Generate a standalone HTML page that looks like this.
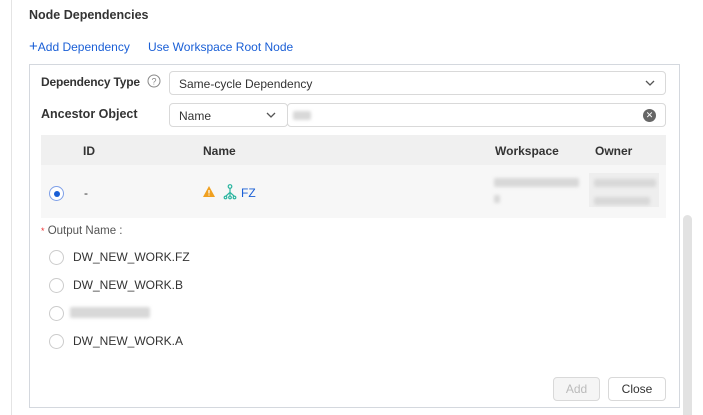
<!DOCTYPE html><html><head><style>
body{margin:0;width:703px;height:415px;background:#fff;font-family:"Liberation Sans",sans-serif;font-size:12px;color:#333;position:relative;overflow:hidden}
.a{position:absolute}
.sel{position:absolute;border:1px solid #d9d9d9;border-radius:4px;background:#fff;box-sizing:border-box}
.rad{position:absolute;width:15px;height:15px;border:1px solid #ccc;border-radius:50%;box-sizing:border-box;background:#fff}
.blur{position:absolute;background:#d8d8d8;filter:blur(1.5px);border-radius:2px}
.chev{position:absolute;top:8px}
</style></head><body>
<div class="a" style="left:11px;top:0;width:1px;height:415px;background:#e4e4e4"></div>
<div class="a" style="left:29px;top:8px;font-weight:bold;font-size:12.5px;color:#333">Node Dependencies</div>
<div class="a" style="left:29px;top:40px;color:#1a5fd6"><span style="font-size:15px;line-height:12px">+</span>Add Dependency</div>
<div class="a" style="left:148px;top:40px;color:#1a5fd6">Use Workspace Root Node</div>
<div class="a" style="left:29px;top:64px;width:651px;height:344px;border:1px solid #d4d8de;box-sizing:border-box"></div>
<div class="a" style="left:41px;top:75px;font-weight:bold;font-size:12px;letter-spacing:-0.2px">Dependency Type</div>
<svg class="a" style="left:147px;top:74px" width="14" height="14" viewBox="0 0 14 14"><circle cx="7" cy="7" r="6" fill="none" stroke="#888"/><text x="7" y="10.5" font-size="9" text-anchor="middle" fill="#888" font-family="Liberation Sans">?</text></svg>
<div class="sel" style="left:169px;top:71px;width:497px;height:24px"><span class="a" style="left:9px;top:5px">Same-cycle Dependency</span><svg class="chev" style="right:10px" width="10" height="6" viewBox="0 0 10 6"><path d="M1 1l4 4 4-4" fill="none" stroke="#555" stroke-width="1.3"/></svg></div>
<div class="a" style="left:41px;top:107px;font-weight:bold;font-size:12.5px">Ancestor Object</div>
<div class="sel" style="left:169px;top:103px;width:119px;height:24px"><span class="a" style="left:9px;top:5px">Name</span><svg class="chev" style="right:11px" width="10" height="6" viewBox="0 0 10 6"><path d="M1 1l4 4 4-4" fill="none" stroke="#555" stroke-width="1.3"/></svg></div>
<div class="sel" style="left:287px;top:103px;width:379px;height:24px"><div class="blur" style="left:5px;top:7px;width:18px;height:9px"></div><span class="a" style="right:9px;top:5px;width:13px;height:13px;border-radius:50%;background:#666;color:#fff;font-size:9px;line-height:13px;text-align:center">✕</span></div>
<div class="a" style="left:41px;top:135px;width:625px;height:30px;background:#f0f0f0"></div>
<div class="a" style="left:83px;top:144px;font-weight:bold">ID</div>
<div class="a" style="left:203px;top:144px;font-weight:bold">Name</div>
<div class="a" style="left:495px;top:144px;font-weight:bold">Workspace</div>
<div class="a" style="left:595px;top:144px;font-weight:bold">Owner</div>
<div class="a" style="left:41px;top:165px;width:625px;height:53px;background:#f7f7f7"></div>
<div class="rad" style="left:49px;top:186px;border-color:#7fa0e8"><div class="a" style="left:3.5px;top:3.5px;width:6px;height:6px;border-radius:50%;background:#1a5fd6"></div></div>
<div class="a" style="left:84px;top:186px">-</div>
<svg class="a" style="left:203px;top:186px" width="12" height="11" viewBox="0 0 12 11"><path d="M6 0L12 11H0z" fill="#f0a020"/><path d="M6 4v3.5M6 8.5v1" stroke="#fff" stroke-width="1.2"/></svg>
<svg class="a" style="left:223px;top:184px" width="14" height="16" viewBox="0 0 14 16" fill="none" stroke="#2bb5a0" stroke-width="1.2"><circle cx="7" cy="2.5" r="1.8"/><path d="M7 4.3v4M7 8.3L2.5 12.5M7 8.3l4.5 4.2M7 8.3v4.2"/><circle cx="2.5" cy="13.5" r="1.3"/><circle cx="7" cy="13.5" r="1.3"/><circle cx="11.5" cy="13.5" r="1.3"/></svg>
<div class="a" style="left:241px;top:186px;color:#1a5fd6">FZ</div>
<div class="blur" style="left:494px;top:178px;width:85px;height:9px"></div>
<div class="blur" style="left:494px;top:195px;width:6px;height:8px"></div>
<div class="a" style="left:589px;top:173px;width:70px;height:34px;background:#eee"></div>
<div class="blur" style="left:594px;top:179px;width:62px;height:8px"></div>
<div class="blur" style="left:594px;top:197px;width:56px;height:8px"></div>
<div class="a" style="left:41px;top:225px;font-size:11.5px;color:#555"><span style="color:#e33;font-size:9px">*</span> Output Name :</div>
<div class="rad" style="left:49px;top:250px"></div><div class="a" style="left:73px;top:250px">DW_NEW_WORK.FZ</div>
<div class="rad" style="left:49px;top:278px"></div><div class="a" style="left:73px;top:278px">DW_NEW_WORK.B</div>
<div class="rad" style="left:49px;top:306px"></div><div class="blur" style="left:70px;top:307px;width:80px;height:11px"></div>
<div class="rad" style="left:49px;top:334px"></div><div class="a" style="left:73px;top:334px">DW_NEW_WORK.A</div>
<div class="sel" style="left:553px;top:377px;width:47px;height:24px;background:#f5f5f5;color:#bbb;text-align:center;line-height:22px">Add</div>
<div class="sel" style="left:608px;top:377px;width:58px;height:24px;text-align:center;line-height:22px">Close</div>
<div class="a" style="left:683px;top:215px;width:9px;height:200px;background:#e2e2e2;border-radius:5px 5px 0 0"></div>
</body></html>
